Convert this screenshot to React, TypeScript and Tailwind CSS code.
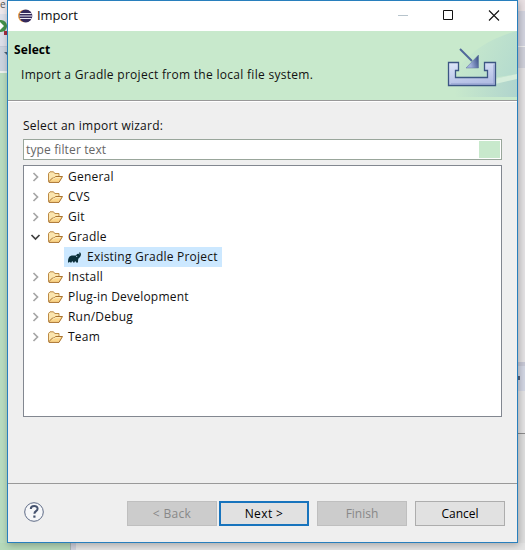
import React from "react";

function EclipseLogo() {
  return (
    <svg width="15" height="14" viewBox="0 0 15 14">
      <circle cx="6.2" cy="7" r="6.2" fill="#e9a04a" />
      <circle cx="7.8" cy="7" r="6.5" fill="#352a5c" />
      <path d="M2 4.500h11.6M1.4 7h12.8M2 9.500h11.6" stroke="#eceaf4" strokeWidth="1.100" />
    </svg>
  );
}

function FolderIcon() {
  return (
    <svg width="16" height="16" viewBox="0 0 16 16" strokeLinejoin="round">
      <path d="M1.500 12.500V4.500L3 2.800h3.500l1.300 1.700h4.200v3" fill="#fbe5ae" stroke="#bd8b46" />
      <path d="M1.600 13 5.200 9.200l2-.2 1.400-1.500h6.900L12 13.400H2z" fill="#fbd68a" stroke="#a8722f" />
      <path d="M5.500 10.200 8.800 8.700h4.500" stroke="#fff0c4" fill="none" />
    </svg>
  );
}

function GradleIcon() {
  return (
    <svg width="16" height="14" viewBox="0 0 16 14" fill="#0b303b">
      <path d="M2 12.500c-.1-3.600.6-6 3-6.800 1.900-.6 3.300.3 4.600-.3 1-.3 1.200-1.600 2.400-1.700 1 0 1.200.5 1 .9.600-.2.700-1-.1-1.700 1-.9 2.300.1 2 2-.2 1.700-1.400 2.500-2.200 3.400-.6.700-.6 2.200-.7 4.200h-1.900c-.1-1.600-1.400-1.600-1.600 0H7.100c-.1-1.600-1.300-1.600-1.500 0H4.200c-.2-1.200-.9-1.100-1.100 0z" />
      <circle cx="10.700" cy="6.300" r=".6" fill="#cce8ff" />
    </svg>
  );
}

function ImportBanner() {
  return (
    <svg className="block" width="80" height="66" viewBox="0 0 80 66">
      <defs>
        <linearGradient id="sweep" x1="0.2" y1="0.200" x2="1" y2="0.500">
          <stop offset="0" stopColor="#c8e9cc" />
          <stop offset="1" stopColor="#b6dcce" />
        </linearGradient>
        <linearGradient id="low" x1="0.200" y1="0" x2="1" y2="0">
          <stop offset="0" stopColor="#c8e9cc" />
          <stop offset="1" stopColor="#b0d4cd" />
        </linearGradient>
        <linearGradient id="tray" x1="0" y1="0" x2="0.300" y2="1">
          <stop offset="0" stopColor="#dfe8fa" />
          <stop offset="1" stopColor="#b3bee4" />
        </linearGradient>
        <linearGradient id="head" x1="0" y1="0.300" x2="1" y2="0">
          <stop offset="0.200" stopColor="#a0b0dc" />
          <stop offset="1" stopColor="#31477f" />
        </linearGradient>
      </defs>
      <path d="M80 0C50 8 24 25 12 54l68-11z" fill="url(#sweep)" />
      <path d="M10 58 80 43v23H2z" fill="url(#low)" />
      <path d="M48 50 80 43v5L54 54z" fill="#d5eddb" />
      <path d="M11.500 31.500h10v8h-3v7h32v-7h-3v-8h11v23h-47z" fill="url(#tray)" stroke="#3c5683" strokeWidth="1.300" />
      <path d="M57 33.500v19.500H14" fill="none" stroke="#8f9ccc" />
      <path d="M23 18 35 30" stroke="#50679a" strokeWidth="1.900" />
      <path d="M41.500 24v13H29z" fill="url(#head)" stroke="#5c719d" strokeWidth=".5" />
    </svg>
  );
}

function Chevron({ open }: { open?: boolean }) {
  return (
    <svg width="12" height="12" viewBox="0 0 12 12" fill="none" strokeWidth="1.700">
      {open ? <path d="m1.500 4 4 4 4-4" stroke="#404040" /> : <path d="m3.500 2 4 4-4 4" stroke="#a6a6a6" />}
    </svg>
  );
}

function Row({ name, open }: { name: string; open?: boolean }) {
  return (
    <div className="flex h-5 items-center pl-[6px]">
      <Chevron open={open} />
      <span className="ml-[5px] mr-[5px]"><FolderIcon /></span>
      <span className="tracking-[0.21px]">{name}</span>
    </div>
  );
}

function Button({ children, look }: { children: React.ReactNode; look: string }) {
  return <button className={"flex h-[25px] w-[90px] items-center justify-center " + look}>{children}</button>;
}

function Backdrop() {
  return (
    <div className="col-start-1 row-start-1 flex h-[550px] w-[525px] flex-col">
      <div className="flex h-[543px] justify-between">
        <div className="w-[7px] overflow-hidden bg-[#b9dcbf]">
          <div className="h-[46px] bg-[#dcdfe9]">
            <div className="h-[14px] bg-[#eee8ec] text-[10px] leading-[8px] text-[#555]">e</div>
            <svg className="mt-[4px]" width="7" height="18"><circle cx="1" cy="8" r="6" fill="#43914a" /><path d="m0 4 4 4-4 4z" fill="#fff" /><path d="M4 13h3v4H4z" fill="#a72d3d" /></svg>
          </div>
          <div className="h-[25px] border-t border-[#c4cad8] bg-[#cbd3df] pt-[5px]">
            <svg width="7" height="5"><path d="M4 0h3v3z" fill="#4d6172" /></svg>
          </div>
          <div className="h-[2px] bg-[#edf0ee]" />
        </div>
        <div className="w-[7px] bg-[#dedede]">
          <div className="h-[11px] bg-[#e8e0e3]" />
          <div className="h-[35px] bg-[#d2d3df]" />
          <div className="h-[22px] border-t border-[#eee] bg-[#cfd0da]" />
          <div className="h-[294px] bg-[#e4e2e4]" />
          <div className="h-[4px] bg-[#c7c8d5]" />
          <div className="h-[25px] bg-[#d2d6e3] pt-[10px]">
            <div className="h-[4px] w-[2px] bg-[#56617a]" />
          </div>
          <div className="h-[43px] border-b border-[#8b8b8b] bg-[#e4e3e4]" />
        </div>
      </div>
      <div className="flex h-[7px] bg-[#e4e4e4]">
        <div className="w-[70px] bg-[#b5d9b9]" />
        <div className="w-[6px] border-l border-[#a7b4b5] bg-[#cfd1dd]" />
      </div>
    </div>
  );
}

export default function App() {
  return (
    <div className="grid h-[550px] w-[525px] overflow-hidden font-['Open_Sans','Noto_Sans',sans-serif] text-[12px] text-[#111]">
      <Backdrop />
      <div className="z-10 col-start-1 row-start-1 ml-[7px] flex h-[543px] w-[511px] flex-col border border-[#287fbd] bg-[#efefef] shadow-[1px_2px_7px_rgba(0,0,0,0.28)]">
        <header className="flex h-[30px] shrink-0 items-center bg-white pl-[10px]">
          <EclipseLogo />
          <span className="ml-[4px] text-[13px] tracking-[-0.1px]">Import</span>
          <svg className="ml-auto mr-[7px]" width="120" height="30" fill="none" stroke="#111">
            <path d="M8 14.500h10" stroke="#b7c4cc" />
            <path d="M53.500 9.500h9v9h-9z" />
            <path d="m99 9.500 10 10m0-10-10 10" strokeWidth="1.100" />
          </svg>
        </header>
        <section className="flex h-[70px] shrink-0 justify-between border-b border-[#999] bg-[#c8e9cc]">
          <div className="pl-[6px] pt-[10px]">
            <h1 className="h-[18px] text-[12px] font-bold leading-[18px] tracking-[0.1px] text-black">Select</h1>
            <p className="ml-[7px] mt-[7px] leading-[18px] tracking-[0.29px]">Import a Gradle project from the local file system.</p>
          </div>
          <ImportBanner />
        </section>
        <main className="flex grow flex-col border-t border-white px-[15px]">
          <label className="mt-[15px] h-[18px] leading-[18px] tracking-[0.24px]">Select an import wizard:</label>
          <div className="mt-[4px] flex h-[21px] items-center justify-between border border-[#99a69b] bg-white pl-[2px] pr-[1px] text-[#666]">
            <span className="tracking-[0.13px]">type filter text</span>
            <span className="h-[17px] w-[21px] bg-[#c8e9cc]" />
          </div>
          <div className="mt-[5px] h-[252px] border border-[#828790] bg-white pt-[1px]">
            <Row name="General" />
            <Row name="CVS" />
            <Row name="Git" />
            <Row name="Gradle" open />
            <div className="ml-[40px] flex h-5 w-[158px] items-center bg-[#cce8ff] pl-[2px]">
              <GradleIcon />
              <span className="ml-[5px] tracking-[0.22px]">Existing Gradle Project</span>
            </div>
            <Row name="Install" />
            <Row name="Plug-in Development" />
            <Row name="Run/Debug" />
            <Row name="Team" />
          </div>
        </main>
        <footer className="flex h-[59px] shrink-0 items-start border-t border-[#999] px-[12px] pt-[17px]">
          <svg className="ml-[3px] mr-auto" width="22" height="22" viewBox="0 0 22 22" fill="none">
            <circle cx="11" cy="11" r="9.300" stroke="#5e6b86" fill="#f6f7f9" />
            <path d="M7.800 8c0-4 6.800-4 6.800-.3 0 2.500-3.200 2.400-3.200 5" stroke="#46536f" strokeWidth="2" />
            <path d="M10.300 14.500h2.200v2.200h-2.200z" fill="#46536f" />
          </svg>
          <div className="flex">
            <Button look="border border-[#bfbfbf] bg-[#ccc] text-[#888] tracking-[0.3px]">&lt; Back</Button>
            <span className="w-[2px]" />
            <Button look="border-2 border-[#1874bd] bg-[#e1e1e1] text-black tracking-[0.4px]">Next &gt;</Button>
            <span className="w-[8px]" />
            <Button look="border border-[#bfbfbf] bg-[#ccc] text-[#888]">Finish</Button>
            <span className="w-[8px]" />
            <Button look="border border-[#adadad] bg-[#e1e1e1] text-black">Cancel</Button>
          </div>
        </footer>
      </div>
    </div>
  );
}
